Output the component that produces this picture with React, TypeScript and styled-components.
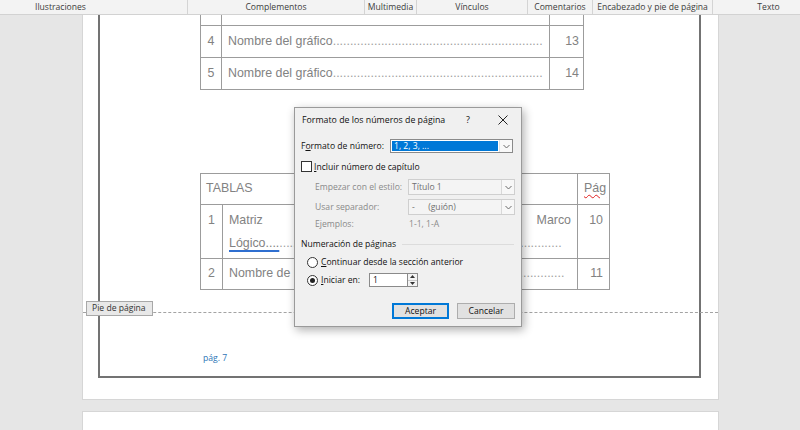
import React from 'react';
import styled, { createGlobalStyle } from 'styled-components';

const UI = `"Segoe UI", "Open Sans", "Noto Sans", sans-serif`;
const DOC = `"Liberation Sans", Arial, sans-serif`;

const Global = createGlobalStyle`
  html, body { margin: 0; padding: 0; background: #e6e6e6; overflow: hidden; }
  #root { width: 800px; height: 430px; }
`;

const Screen = styled.div`
  position: relative;
  width: 800px;
  height: 430px;
  overflow: hidden;
  background: #e6e6e6;
  display: flex;
  flex-direction: column;
`;

/* ---------- Ribbon group labels ---------- */
const Ribbon = styled.div`
  display: flex;
  height: 15px;
  box-sizing: border-box;
  background: #f3f3f3;
  border-bottom: 1px solid #d2d2d2;
  flex-shrink: 0;
  overflow: hidden;
  position: relative;
  z-index: 2;
`;

const Group = styled.div<{ $w: number; $start?: boolean }>`
  width: ${(p) => p.$w}px;
  flex-shrink: 0;
  box-sizing: border-box;
  border-right: 1px solid #d4d4d4;
  display: flex;
  align-items: center;
  justify-content: ${(p) => (p.$start ? 'flex-start' : 'center')};
  padding-left: ${(p) => (p.$start ? 35 : 0)}px;
  font-family: ${UI};
  font-size: 8.6px;
  color: #3c3c3c;
  white-space: nowrap;
`;

/* ---------- Document area ---------- */
const Workspace = styled.div`
  display: flex;
  flex-direction: column;
  gap: 11px;
  padding-left: 82px;
`;

const Page = styled.div<{ $h: number }>`
  position: relative;
  width: 637px;
  height: ${(p) => p.$h}px;
  box-sizing: border-box;
  background: #fff;
  border: 1px solid #d6d6d6;
  border-top: none;
  padding: 0 17px 0 15px;
  flex-shrink: 0;
`;

const NextPage = styled(Page)`
  border-top: 1px solid #d6d6d6;
  border-bottom: none;
`;

const Frame = styled.div`
  height: 363px;
  box-sizing: border-box;
  border: 2px solid #737373;
  border-top: none;
  padding-left: 100px;
  display: flex;
  flex-direction: column;
`;

const Table = styled.table<{ $w: number; $mt: number }>`
  width: ${(p) => p.$w}px;
  margin-top: ${(p) => p.$mt}px;
  border-collapse: collapse;
  table-layout: fixed;
  font-family: ${DOC};
  font-size: 12.4px;
  color: #828282;
`;

const Cell = styled.td<{ $align?: string; $h?: number; $pl?: number; $pr?: number; $top?: boolean }>`
  border: 1px solid #9c9c9c;
  padding: ${(p) => (p.$top ? 4 : 0)}px ${(p) => p.$pr ?? 0}px 0 ${(p) => p.$pl ?? 0}px;
  height: ${(p) => p.$h ?? 31}px;
  box-sizing: border-box;
  text-align: ${(p) => p.$align ?? 'left'};
  vertical-align: ${(p) => (p.$top ? 'top' : 'middle')};
  line-height: 23px;
  white-space: nowrap;
  overflow: hidden;
`;

const TopBorderlessRow = styled.tr`
  td { border-top: none; }
`;

const LeaderLine = styled.div`
  display: flex;
  overflow: hidden;
`;

const Leader = styled.span`
  overflow: hidden;
  white-space: nowrap;
  color: #a0a0a0;
`;

const Justified = styled.div`
  display: flex;
  justify-content: space-between;
  padding-right: 6px;
`;

const Grammar = styled.span`
  text-decoration: underline solid #2f6fd0;
  text-decoration-thickness: 2px;
  text-underline-offset: 3px;
`;

const Spelling = styled.span`
  text-decoration: underline wavy #e02020;
  text-decoration-thickness: 1px;
  text-underline-offset: 2px;
`;

const PageNumber = styled.div`
  margin-top: 63px;
  padding-left: 3px;
  font-family: ${UI};
  font-size: 8.6px;
  color: #2e75b6;
  line-height: 10px;
`;

const FooterMarker = styled.div`
  position: absolute;
  left: 0;
  right: 0;
  top: 282px;
  height: 15px;
  border-bottom: 1px dashed #a3a3a3;
  box-sizing: content-box;
`;

const FooterTag = styled.div`
  display: inline-flex;
  align-items: center;
  margin-left: 3px;
  height: 15px;
  box-sizing: border-box;
  padding: 0 5px;
  width: 67px;
  background: #e8e8e8;
  border: 1px solid #a8a8a8;
  font-family: ${UI};
  font-size: 8.6px;
  color: #333;
`;

/* ---------- Dialog ---------- */
const Dialog = styled.div`
  position: absolute;
  left: 294px;
  top: 107px;
  width: 228px;
  height: 220px;
  box-sizing: border-box;
  background: #f0f0f0;
  border: 1px solid #9a9a9a;
  box-shadow: 2px 3px 9px rgba(0, 0, 0, 0.32);
  font-family: ${UI};
  font-size: 8.6px;
  color: #111;
  display: flex;
  flex-direction: column;
  z-index: 5;
`;

const TitleBar = styled.div`
  height: 23px;
  display: flex;
  align-items: center;
  padding: 0 13px 0 7px;
  font-size: 8.8px;
`;

const Title = styled.div`
  flex: 1;
`;

const Help = styled.div`
  margin-right: 28px;
  font-size: 9px;
`;

const Body = styled.div`
  display: flex;
  flex-direction: column;
  padding: 0 6px;
`;

const Row = styled.div<{ $h: number; $mt: number; $indent?: number }>`
  display: flex;
  align-items: center;
  height: ${(p) => p.$h}px;
  margin-top: ${(p) => p.$mt}px;
  padding-left: ${(p) => p.$indent ?? 0}px;
  white-space: nowrap;
`;

const Label = styled.div<{ $w?: number; $muted?: boolean }>`
  width: ${(p) => (p.$w ? `${p.$w}px` : 'auto')};
  flex-shrink: 0;
  color: ${(p) => (p.$muted ? '#8a8a8a' : '#111')};
`;

const Select = styled.div<{ $w: number; $h: number; $disabled?: boolean }>`
  width: ${(p) => p.$w}px;
  height: ${(p) => p.$h}px;
  box-sizing: border-box;
  display: flex;
  background: ${(p) => (p.$disabled ? '#f4f4f4' : '#fff')};
  border: 1px solid ${(p) => (p.$disabled ? '#cfcfcf' : '#8a8a8a')};
`;

const SelectValue = styled.div<{ $selected?: boolean; $muted?: boolean }>`
  flex: 1;
  display: flex;
  align-items: center;
  margin: ${(p) => (p.$selected ? '1px' : '0')};
  padding-left: ${(p) => (p.$selected ? 2 : 3)}px;
  background: ${(p) => (p.$selected ? '#0078d7' : 'transparent')};
  color: ${(p) => (p.$selected ? '#fff' : p.$muted ? '#707070' : '#111')};
  white-space: pre;
`;

const Arrow = styled.div<{ $disabled?: boolean }>`
  width: 12px;
  display: flex;
  align-items: center;
  justify-content: center;
  border-left: 1px solid ${(p) => (p.$disabled ? '#d8d8d8' : '#e2e2e2')};
  background: ${(p) => (p.$disabled ? '#f7f7f7' : '#f9f9f9')};
`;

const Box = styled.div`
  width: 11px;
  height: 11px;
  box-sizing: border-box;
  border: 1px solid #333;
  background: #fff;
  margin-right: 2px;
`;

const Radio = styled.div<{ $on?: boolean }>`
  width: 11px;
  height: 11px;
  box-sizing: border-box;
  border-radius: 50%;
  border: 1px solid #333;
  background: #fff;
  margin-right: 3px;
  display: flex;
  align-items: center;
  justify-content: center;
  &::after {
    content: '';
    width: 5px;
    height: 5px;
    border-radius: 50%;
    background: ${(p) => (p.$on ? '#222' : 'transparent')};
  }
`;

const Muted = styled.div<{ $pl?: number }>`
  color: #8a8a8a;
  padding-left: ${(p) => p.$pl ?? 0}px;
`;

const SectionTitle = styled.div`
  display: flex;
  align-items: center;
  flex: 1;
  &::after {
    content: '';
    flex: 1;
    height: 1px;
    margin: 1px 1px 0 6px;
    background: #dcdcdc;
  }
`;

const SpinInput = styled.div`
  width: 38px;
  height: 14px;
  box-sizing: border-box;
  border: 1px solid #8a8a8a;
  border-right: none;
  background: #fff;
  display: flex;
  align-items: center;
  padding-left: 3px;
`;

const Spin = styled.div`
  width: 11px;
  height: 14px;
  box-sizing: border-box;
  border: 1px solid #8a8a8a;
  display: flex;
  flex-direction: column;
  background: #f3f3f3;
`;

const SpinHalf = styled.div<{ $down?: boolean }>`
  flex: 1;
  display: flex;
  align-items: center;
  justify-content: center;
  border-top: ${(p) => (p.$down ? '1px solid #c8c8c8' : 'none')};
`;

const Buttons = styled.div`
  display: flex;
  justify-content: flex-end;
  gap: 8px;
  margin-top: 16px;
`;

const Button = styled.div<{ $w: number; $primary?: boolean }>`
  width: ${(p) => p.$w}px;
  height: 16px;
  box-sizing: border-box;
  display: flex;
  align-items: center;
  justify-content: center;
  background: #e1e1e1;
  border: ${(p) => (p.$primary ? '2px solid #0078d7' : '1px solid #adadad')};
  color: #111;
`;

const Chevron = () => (
  <svg width="7" height="5" viewBox="0 0 7 5">
    <path d="M0.5 1 L3.5 4 L6.5 1" fill="none" stroke="#6a6a6a" strokeWidth="1" />
  </svg>
);

const Tri = ({ up }: { up?: boolean }) => (
  <svg width="5" height="3" viewBox="0 0 5 3">
    <path d={up ? 'M0 3 L2.5 0 L5 3 Z' : 'M0 0 L2.5 3 L5 0 Z'} fill="#333" />
  </svg>
);

const dots = (n: number) => '.'.repeat(n);

export default function App() {
  return (
    <>
      <Global />
      <Screen>
        <Ribbon>
          <Group $w={188} $start>Ilustraciones</Group>
          <Group $w={177}>Complementos</Group>
          <Group $w={52}>Multimedia</Group>
          <Group $w={111}>Vínculos</Group>
          <Group $w={65}>Comentarios</Group>
          <Group $w={120}>Encabezado y pie de página</Group>
          <Group $w={112}>Texto</Group>
        </Ribbon>
        <Workspace>
          <Page $h={385}>
            <Frame>
              <Table $w={383} $mt={0}>
                <colgroup>
                  <col style={{ width: 21 }} />
                  <col style={{ width: 328 }} />
                  <col style={{ width: 34 }} />
                </colgroup>
                <tbody>
                  <TopBorderlessRow>
                    <Cell $h={10} />
                    <Cell $h={10} />
                    <Cell $h={10} />
                  </TopBorderlessRow>
                  <tr>
                    <Cell $h={32} $align="center">4</Cell>
                    <Cell $h={32} $pl={6}>
                      <LeaderLine>
                        <span>Nombre del gráfico</span>
                        <Leader>{dots(61)}</Leader>
                      </LeaderLine>
                    </Cell>
                    <Cell $h={32} $align="right" $pr={4}>13</Cell>
                  </tr>
                  <tr>
                    <Cell $h={32} $align="center">5</Cell>
                    <Cell $h={32} $pl={6}>
                      <LeaderLine>
                        <span>Nombre del gráfico</span>
                        <Leader>{dots(61)}</Leader>
                      </LeaderLine>
                    </Cell>
                    <Cell $h={32} $align="right" $pr={4}>14</Cell>
                  </tr>
                </tbody>
              </Table>

              <Table $w={409} $mt={83}>
                <colgroup>
                  <col style={{ width: 22 }} />
                  <col style={{ width: 355 }} />
                  <col style={{ width: 32 }} />
                </colgroup>
                <tbody>
                  <tr>
                    <Cell $h={31} colSpan={2} $pl={5}>TABLAS</Cell>
                    <Cell $h={31} $pl={6}><Spelling>Pág</Spelling></Cell>
                  </tr>
                  <tr>
                    <Cell $h={54} $align="center" $top>1</Cell>
                    <Cell $h={54} $pl={6} $top>
                      <Justified>
                        <span>Matriz</span>
                        <span>Marco</span>
                      </Justified>
                      <LeaderLine>
                        <Grammar>Lógico....</Grammar>
                        <Leader>{dots(82)}</Leader>
                      </LeaderLine>
                    </Cell>
                    <Cell $h={54} $align="right" $pr={6} $top>10</Cell>
                  </tr>
                  <tr>
                    <Cell $h={31} $align="center">2</Cell>
                    <Cell $h={31} $pl={6}>
                      <LeaderLine>
                        <span>Nombre de la tabla</span>
                        <Leader>{dots(67)}</Leader>
                      </LeaderLine>
                    </Cell>
                    <Cell $h={31} $align="right" $pr={6}>11</Cell>
                  </tr>
                </tbody>
              </Table>

              <PageNumber>pág. 7</PageNumber>
            </Frame>
            <FooterMarker>
              <FooterTag>Pie de página</FooterTag>
            </FooterMarker>
          </Page>
          <NextPage $h={40} />
        </Workspace>

        <Dialog>
          <TitleBar>
            <Title>Formato de los números de página</Title>
            <Help>?</Help>
            <svg width="10" height="10" viewBox="0 0 10 10">
              <path d="M0.5 0.5 L9.5 9.5 M9.5 0.5 L0.5 9.5" stroke="#222" strokeWidth="1" />
            </svg>
          </TitleBar>
          <Body>
            <Row $h={14} $mt={8}>
              <Label $w={89}>F<u>o</u>rmato de número:</Label>
              <Select $w={123} $h={14}>
                <SelectValue $selected>1, 2, 3, ...</SelectValue>
                <Arrow><Chevron /></Arrow>
              </Select>
            </Row>
            <Row $h={11} $mt={8}>
              <Box />
              <Label><u>I</u>ncluir número de capítulo</Label>
            </Row>
            <Row $h={16} $mt={7} $indent={14}>
              <Label $w={93} $muted>Empezar con el estilo:</Label>
              <Select $w={107} $h={16} $disabled>
                <SelectValue $muted>Título 1</SelectValue>
                <Arrow $disabled><Chevron /></Arrow>
              </Select>
            </Row>
            <Row $h={16} $mt={4} $indent={14}>
              <Label $w={93} $muted>Usar separador:</Label>
              <Select $w={107} $h={16} $disabled>
                <SelectValue $muted>{'-      (guión)'}</SelectValue>
                <Arrow $disabled><Chevron /></Arrow>
              </Select>
            </Row>
            <Row $h={12} $mt={3} $indent={14}>
              <Label $w={93} $muted>Ejemplos:</Label>
              <Muted $pl={1}>1-1, 1-A</Muted>
            </Row>
            <Row $h={12} $mt={8}>
              <SectionTitle>Numeración de páginas</SectionTitle>
            </Row>
            <Row $h={12} $mt={6} $indent={6}>
              <Radio />
              <Label><u>C</u>ontinuar desde la sección anterior</Label>
            </Row>
            <Row $h={14} $mt={5} $indent={6}>
              <Radio $on />
              <Label $w={48}><u>I</u>niciar en:</Label>
              <SpinInput>1</SpinInput>
              <Spin>
                <SpinHalf><Tri up /></SpinHalf>
                <SpinHalf $down><Tri /></SpinHalf>
              </Spin>
            </Row>
            <Buttons>
              <Button $w={57} $primary>Aceptar</Button>
              <Button $w={58}>Cancelar</Button>
            </Buttons>
          </Body>
        </Dialog>
      </Screen>
    </>
  );
}
